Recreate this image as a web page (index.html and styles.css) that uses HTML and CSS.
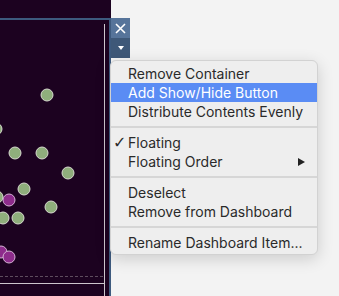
FILE: index.html
```html
<!DOCTYPE html>
<html lang="en">
<head>
    <meta charset="UTF-8">
    <title>Dashboard Container Menu</title>
    <link rel="stylesheet" href="styles.css">
</head>
<body>
    <div class="page">
        <div class="dashboard">
            <div class="container-frame">
                <!-- scatter plot inside the selected container -->
                <svg class="scatter" width="109" height="276" viewBox="0 20 109 276">
                    <line x1="104.5" y1="24" x2="104.5" y2="296" class="axis"/>
                    <line x1="0" y1="276.5" x2="104" y2="276.5" class="ref-line"/>
                    <line x1="0" y1="283.5" x2="104" y2="283.5" class="axis"/>
                    <circle cx="47" cy="95" r="6" class="dot green"/>
                    <circle cx="-4" cy="129" r="6" class="dot green"/>
                    <circle cx="15" cy="153" r="6" class="dot green"/>
                    <circle cx="42" cy="153" r="6" class="dot green"/>
                    <circle cx="68" cy="173" r="6" class="dot green"/>
                    <circle cx="24" cy="189" r="6" class="dot green"/>
                    <circle cx="-3" cy="197" r="6" class="dot green"/>
                    <circle cx="9" cy="200" r="6" class="dot purple"/>
                    <circle cx="51" cy="207" r="6" class="dot green"/>
                    <circle cx="3" cy="218" r="6" class="dot green"/>
                    <circle cx="18" cy="218" r="6" class="dot green"/>
                    <circle cx="1" cy="252" r="6" class="dot purple"/>
                    <circle cx="9" cy="257" r="6" class="dot purple"/>
                </svg>
            </div>
        </div>

        <div class="tools">
            <div class="tool-btn close-btn">
                <svg width="11" height="11" viewBox="0 0 11 11"><path d="M1 1 L10 10 M10 1 L1 10" stroke="#fff" stroke-width="1.6" fill="none"/></svg>
            </div>
            <div class="tool-btn more-btn">
                <span class="down-caret"></span>
            </div>
        </div>
    </div>

    <!-- Context menu -->
    <div class="menu">
        <div class="menu-item"><span class="check"></span>Remove Container</div>
        <div class="menu-item active"><span class="check"></span>Add Show/Hide Button</div>
        <div class="menu-item"><span class="check"></span>Distribute Contents Evenly</div>
        <div class="separator"></div>
        <div class="menu-item"><span class="check">✓</span>Floating</div>
        <div class="menu-item"><span class="check"></span>Floating Order<span class="submenu-arrow"></span></div>
        <div class="separator"></div>
        <div class="menu-item"><span class="check"></span>Deselect</div>
        <div class="menu-item"><span class="check"></span>Remove from Dashboard</div>
        <div class="separator"></div>
        <div class="menu-item"><span class="check"></span>Rename Dashboard Item...</div>
    </div>
</body>
</html>
```

FILE: styles.css
```css
body {
    margin: 0;
    width: 339px;
    height: 296px;
    overflow: hidden;
    background: #f3f3f3;
    font-family: Inter, "Liberation Sans", sans-serif;
}
.page {
    display: flex;
    height: 296px;
}
.dashboard {
    width: 111px;
    padding-top: 18px;
    background: #1c0220;
    display: flex;
    flex-direction: column;
}
.container-frame {
    flex: 1;
    border-top: 2px solid #3d5a7e;
    border-right: 2px solid #3d5a7e;
    overflow: hidden;
}
.scatter {
    display: block;
    overflow: visible;
}
.axis {
    stroke: #cdc6cd;
    stroke-width: 1;
}
.ref-line {
    stroke: #5e4d5e;
    stroke-width: 1;
    stroke-dasharray: 3 2;
}
.dot {
    stroke-width: 1;
}
.dot.green {
    fill: #8fae7c;
    stroke: #d7d9cf;
}
.dot.purple {
    fill: #8e2c8c;
    stroke: #d6b3d6;
}

/* selection toolbar next to the container */
.tools {
    margin-top: 18px;
    display: flex;
    flex-direction: column;
}
.tool-btn {
    width: 19px;
    height: 20px;
    display: flex;
    align-items: center;
    justify-content: center;
}
.close-btn {
    background: #56749a;
}
.more-btn {
    background: #3e5878;
}
.down-caret {
    width: 0;
    height: 0;
    border-left: 3.5px solid transparent;
    border-right: 3.5px solid transparent;
    border-top: 4px solid #fff;
}

/* context menu */
.menu {
    position: absolute;
    left: 110px;
    top: 60px;
    width: 206px;
    padding: 3px 0 2px;
    background: #eeeeee;
    border: 1px solid #d2d2d2;
    border-radius: 6px;
    box-shadow: 0 4px 16px rgba(0, 0, 0, 0.16);
    font-size: 14px;
    color: #2a2a2a;
}
.menu-item {
    display: flex;
    align-items: center;
    height: 19px;
    line-height: 19px;
    white-space: nowrap;
}
.menu-item.active {
    background: #5a8cf4;
    color: #fff;
}
.check {
    width: 15px;
    padding-left: 2px;
    font-family: "DejaVu Sans", sans-serif;
    font-size: 16px;
}
.submenu-arrow {
    margin-left: auto;
    margin-right: 12px;
    width: 0;
    height: 0;
    border-top: 4.5px solid transparent;
    border-bottom: 4.5px solid transparent;
    border-left: 7px solid #222;
}
.separator {
    height: 2px;
    margin: 5px 0;
    background: #d6d6d6;
}
```
